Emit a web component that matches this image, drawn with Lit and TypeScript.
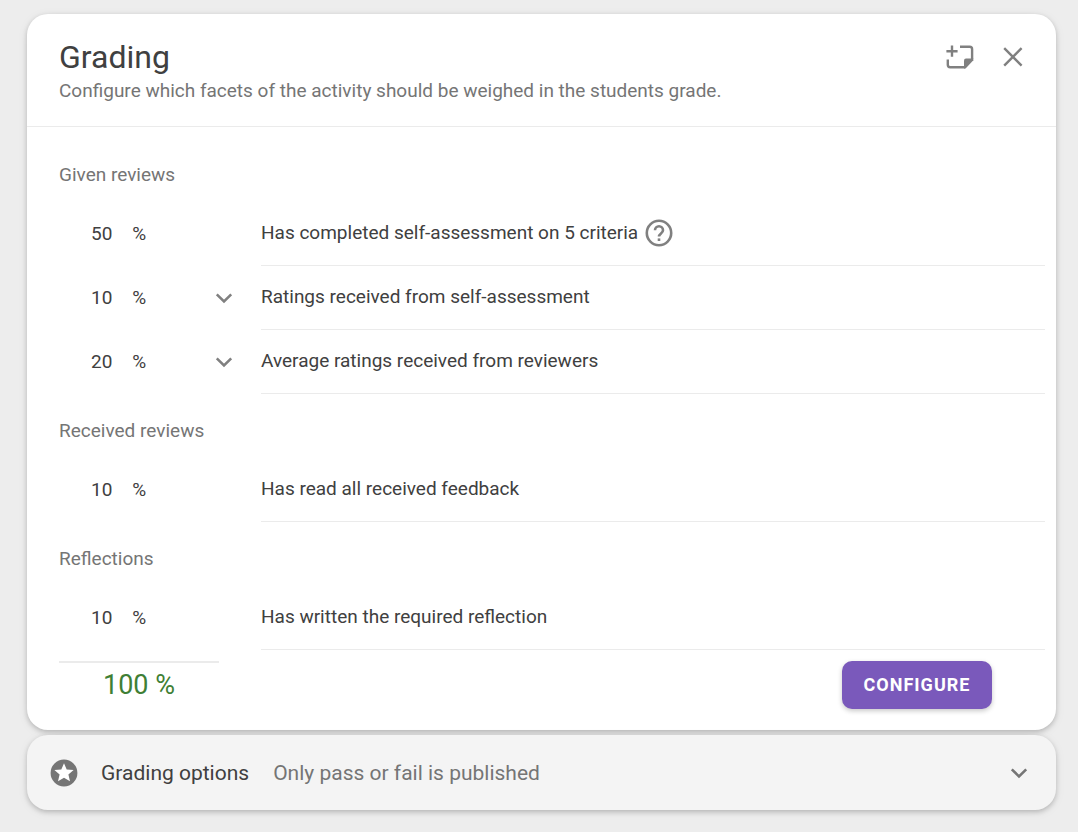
import { LitElement, html, css, svg, nothing } from "lit";
import { customElement, property } from "lit/decorators.js";

interface Item {
  weight: number;
  label: string;
  expandable?: boolean;
  help?: boolean;
}

interface Group {
  title: string;
  items: Item[];
}

const GROUPS: Group[] = [
  {
    title: "Given reviews",
    items: [
      { weight: 50, label: "Has completed self-assessment on 5 criteria", help: true },
      { weight: 10, label: "Ratings received from self-assessment", expandable: true },
      { weight: 20, label: "Average ratings received from reviewers", expandable: true },
    ],
  },
  { title: "Received reviews", items: [{ weight: 10, label: "Has read all received feedback" }] },
  { title: "Reflections", items: [{ weight: 10, label: "Has written the required reflection" }] },
];

const ICONS = {
  note: svg`<path d="M9 4.6v11.2M3.4 10.2h11.2" stroke-width="2.4" />
    <path d="M17 5.8h9.7a2.4 2.4 0 0 1 2.4 2.4V18M4.8 18.4v5.4a2.4 2.4 0 0 0 2.4 2.4H22" stroke-width="2.4" />
    <path d="M21 27.4V19.5a2 2 0 0 1 2-2h7.3v1.7L22.6 27.4z" fill="currentColor" stroke="none" />`,
  close: svg`<path d="M7.2 7.2l17.4 17.4M24.6 7.2L7.2 24.6" stroke-width="2.4" />`,
  chevron: svg`<path d="M8.8 12.4l7.2 7 7.2-7" stroke-width="2.6" />`,
  help: svg`<circle cx="16" cy="16" r="12.2" stroke-width="2.6" />
    <path d="M12 13.3a4 4 0 1 1 8 0c0 3.1-4 3.2-4 6.3" stroke-width="2.6" />
    <path d="M14.7 21.4h2.6V24h-2.6z" fill="currentColor" stroke="none" />`,
  star: svg`<path fill="currentColor" stroke="none" d="M16 2.6a13.4 13.4 0 1 0 0 26.8a13.4 13.4 0 0 0 0-26.8z" />
    <path fill="#fff" stroke="none" d="M16 6.2l2.7 6.3 6.9.6-5.2 4.5 1.6 6.7-6-3.6-6 3.6 1.6-6.7-5.2-4.5 6.9-.6z" />`,
};

@customElement("grading-icon")
export class GradingIcon extends LitElement {
  @property() name: keyof typeof ICONS = "close";

  static styles = css`
    :host {
      display: block;
      width: 32px;
      height: 32px;
    }
    .icon {
      display: block;
      width: 100%;
      height: 100%;
      fill: none;
      stroke: currentColor;
    }
  `;

  render() {
    return html`<svg class="icon" viewBox="0 0 32 32" aria-hidden="true">${ICONS[this.name]}</svg>`;
  }
}

@customElement("app-root")
export class AppRoot extends LitElement {
  static styles = css`
    :host {
      display: block;
      box-sizing: border-box;
      min-height: 100vh;
      padding: 14px 22px 22px 27px;
      background: #ededed;
      color: #404040;
      font-family: Roboto, "Noto Sans", sans-serif;
      font-size: 19px;
      line-height: 24px;
    }
    * {
      box-sizing: border-box;
    }
    h1,
    h2,
    p,
    ul {
      margin: 0;
      padding: 0;
      font-size: inherit;
      font-weight: 400;
      list-style: none;
    }
    button {
      border: 0;
      padding: 0;
      background: none;
      color: #757575;
      font: inherit;
      cursor: pointer;
    }
    grading-icon {
      color: #808080;
    }
    .page {
      display: flex;
      flex-direction: column;
      gap: 5px;
    }
    .card,
    .options {
      border-radius: 21px;
      box-shadow: 0 2px 5px rgba(0, 0, 0, 0.2), 0 2px 12px rgba(0, 0, 0, 0.06);
    }
    .card {
      background: #fff;
    }
    .header {
      display: flex;
      justify-content: space-between;
      padding: 23px 27px 23px 32px;
      border-bottom: 1px solid #ebebeb;
    }
    .title {
      padding-bottom: 2px;
      font-size: 32px;
      line-height: 40px;
    }
    .muted {
      color: #757575;
    }
    .actions {
      display: flex;
      gap: 22px;
      height: 32px;
      padding-top: 4px;
    }
    .body {
      padding: 11px 11px 0 32px;
    }
    .group-title {
      height: 64px;
      padding-top: 25px;
      color: #757575;
    }
    .row {
      display: grid;
      grid-template-columns: 202px 1fr;
      height: 64px;
    }
    .weight {
      display: flex;
      align-items: center;
      gap: 20px;
      padding-left: 32px;
    }
    .toggle {
      margin: 0 21px 0 auto;
    }
    .label {
      display: flex;
      align-items: center;
      gap: 5px;
      padding-bottom: 2px;
      border-bottom: 1px solid #ebebeb;
    }
    .footer {
      display: flex;
      justify-content: space-between;
      align-items: flex-start;
      padding: 11px 64px 21px 32px;
    }
    .total {
      width: 160px;
      padding-top: 6px;
      border-top: 2px solid #ebebeb;
      color: #3f7f35;
      font-size: 27px;
      line-height: 32px;
      text-align: center;
    }
    .configure {
      min-width: 150px;
      height: 48px;
      padding: 0 20px;
      border-radius: 10px;
      background: #7a59bb;
      box-shadow: 0 2px 5px rgba(0, 0, 0, 0.22);
      color: #fff;
      font-size: 18px;
      font-weight: 700;
      letter-spacing: 1px;
      text-transform: uppercase;
    }
    .options {
      display: flex;
      align-items: center;
      width: 100%;
      height: 75px;
      padding: 0 21px;
      background: #f4f4f4;
      font-size: 21px;
      text-align: left;
    }
    .options-icon,
    .options-arrow {
      color: #757575;
    }
    .options-title {
      margin: 0 24px 0 21px;
      color: #404040;
    }
    .options-arrow {
      margin-left: auto;
    }
  `;

  private renderItem(item: Item) {
    return html`<li class="row">
      <div class="weight">
        <span>${item.weight}</span><span>%</span>
        ${item.expandable
          ? html`<button class="toggle" aria-label="Show details">
              <grading-icon name="chevron"></grading-icon>
            </button>`
          : nothing}
      </div>
      <div class="label">
        <span>${item.label}</span>
        ${item.help
          ? html`<button aria-label="Help"><grading-icon name="help"></grading-icon></button>`
          : nothing}
      </div>
    </li>`;
  }

  render() {
    const total = GROUPS.flatMap((g) => g.items).reduce((sum, i) => sum + i.weight, 0);
    return html`<main class="page">
      <section class="card">
        <header class="header">
          <div>
            <h1 class="title">Grading</h1>
            <p class="muted">Configure which facets of the activity should be weighed in the students grade.</p>
          </div>
          <div class="actions">
            <button aria-label="Add note"><grading-icon name="note"></grading-icon></button>
            <button aria-label="Close"><grading-icon name="close"></grading-icon></button>
          </div>
        </header>
        <div class="body">
          ${GROUPS.map(
            (g) => html`<h2 class="group-title">${g.title}</h2>
              <ul>
                ${g.items.map((i) => this.renderItem(i))}
              </ul>`
          )}
        </div>
        <footer class="footer">
          <div class="total">${total} %</div>
          <button class="configure">Configure</button>
        </footer>
      </section>
      <button class="options" aria-expanded="false">
        <grading-icon class="options-icon" name="star"></grading-icon>
        <span class="options-title">Grading options</span>
        <span>Only pass or fail is published</span>
        <grading-icon class="options-arrow" name="chevron"></grading-icon>
      </button>
    </main>`;
  }
}
